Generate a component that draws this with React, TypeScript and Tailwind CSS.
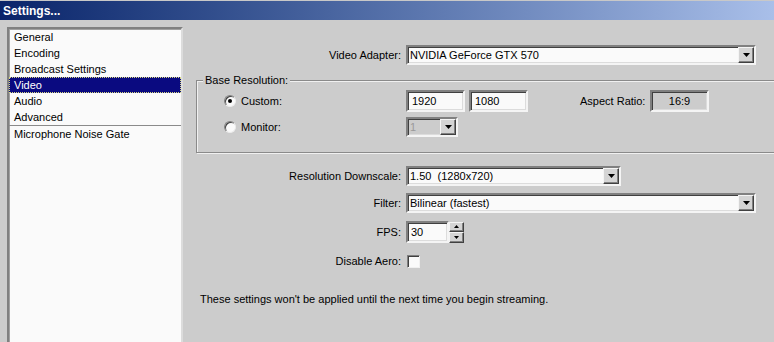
import React from 'react';

const sunken =
  'border-2 border-t-[#808080] border-l-[#808080] border-r-[#f4f4f4] border-b-[#f4f4f4] shadow-[inset_1px_1px_0_#404040,inset_-1px_-1px_0_#dcdcdc]';
const raised =
  'bg-[#d4d4d4] border border-t-[#f4f4f4] border-l-[#f4f4f4] border-r-[#404040] border-b-[#404040] shadow-[inset_-1px_-1px_0_#808080]';

const items = ['General', 'Encoding', 'Broadcast Settings', 'Video', 'Audio', 'Advanced'];

function Arrow({ up = false, small = false }: { up?: boolean; small?: boolean }) {
  const w = small ? 5 : 7;
  const h = small ? 3 : 4;
  return (
    <svg width={w} height={h} viewBox={`0 0 ${w} ${h}`}>
      <polygon
        points={up ? `0,${h} ${w},${h} ${w / 2},0` : `0,0 ${w},0 ${w / 2},${h}`}
        fill="#000"
      />
    </svg>
  );
}

function Select({ value, width, disabled = false }: { value: string; width: string; disabled?: boolean }) {
  return (
    <div
      className={`${sunken} ${width} h-[20px] flex items-center ${disabled ? 'bg-[#cccccc] text-[#9a9a9a]' : 'bg-[#fafafa]'}`}
    >
      <span className="flex-1 pl-[2px] whitespace-pre">{value}</span>
      <div className={`${raised} w-[16px] h-[16px] flex items-center justify-center`}>
        <Arrow />
      </div>
    </div>
  );
}

function Row({ label, children, className = '' }: { label: string; children: React.ReactNode; className?: string }) {
  return (
    <div className={`flex items-center ${className}`}>
      <span className="w-[210px] pr-[5px] text-right whitespace-nowrap">{label}</span>
      {children}
    </div>
  );
}

function Radio({ checked }: { checked: boolean }) {
  return (
    <div className="w-[12px] h-[12px] rounded-full bg-[#fafafa] border border-t-[#808080] border-l-[#808080] border-r-[#ececec] border-b-[#ececec] shadow-[inset_1px_1px_0_#404040] flex items-center justify-center">
      {checked && <div className="w-[4px] h-[4px] rounded-full bg-black" />}
    </div>
  );
}

export default function App() {
  return (
    <div
      className="w-[774px] h-[342px] overflow-hidden bg-[#cccccc] text-[11px] text-black flex flex-col"
      style={{ fontFamily: '"Liberation Sans", Arial, sans-serif' }}
    >
      {/* Title bar */}
      <div className="h-[20px] border-t border-[#c8c8c8] bg-gradient-to-r from-[#0a246a] to-[#a9bfe9] flex items-center pl-[3px] shrink-0">
        <span className="text-white font-bold text-[12px] leading-none">Settings...</span>
      </div>

      <div className="flex flex-1 min-h-0">
        {/* Section list */}
        <div className="pl-[7px] pt-[7px] flex shrink-0">
          <div className="w-[176px] h-[330px] bg-[#fafafa] border-t-2 border-l-2 border-r-2 border-t-[#808080] border-l-[#808080] border-r-[#dcdcdc] shadow-[inset_1px_1px_0_#a0a0a0]">
            {items.map((item) => (
              <div
                key={item}
                className={`h-[16px] flex items-center pl-[5px] ${
                  item === 'Video'
                    ? 'bg-[#0a0a80] text-white outline outline-1 outline-dotted outline-[#d8d880] -outline-offset-1'
                    : ''
                }`}
              >
                {item}
              </div>
            ))}
            <div className="h-px bg-[#8a8a8a]" />
            <div className="h-[16px] flex items-center pl-[5px]">Microphone Noise Gate</div>
          </div>
        </div>

        {/* Video settings */}
        <div className="flex-1 pl-[13px] flex flex-col">
          <Row label="Video Adapter:" className="mt-[25px]">
            <Select value="NVIDIA GeForce GTX 570" width="w-[350px]" />
          </Row>

          <div className="relative mt-[15px] h-[73px] -mr-[4px] border border-[#8a8a8a] shadow-[inset_1px_1px_0_#f0f0f0,1px_1px_0_#f0f0f0]">
            <span className="absolute -top-[8px] left-[6px] bg-[#cccccc] px-[2px] leading-[14px]">Base Resolution:</span>
            <div className="flex items-center mt-[9px] h-[22px]">
              <div className="w-[209px] flex items-center pl-[27px] gap-[5px]">
                <Radio checked />
                <span>Custom:</span>
              </div>
              <div className={`${sunken} w-[59px] h-[22px] bg-[#fafafa] flex items-center pl-[4px]`}>1920</div>
              <div className={`${sunken} w-[59px] h-[22px] bg-[#fafafa] flex items-center pl-[4px] ml-[4px]`}>1080</div>
              <span className="ml-[52px] w-[66px] whitespace-nowrap shrink-0">Aspect Ratio:</span>
              <div className={`${sunken} w-[59px] h-[22px] bg-[#cccccc] flex items-center justify-center ml-[4px] shrink-0`}>16:9</div>
            </div>
            <div className="flex items-center mt-[5px] h-[20px]">
              <div className="w-[209px] flex items-center pl-[27px] gap-[5px]">
                <Radio checked={false} />
                <span>Monitor:</span>
              </div>
              <Select value="1" width="w-[52px]" disabled />
            </div>
          </div>

          <Row label="Resolution Downscale:" className="mt-[13px]">
            <Select value="1.50  (1280x720)" width="w-[215px]" />
          </Row>
          <Row label="Filter:" className="mt-[7px]">
            <Select value="Bilinear (fastest)" width="w-[350px]" />
          </Row>
          <Row label="FPS:" className="mt-[8px]">
            <div className={`${sunken} w-[43px] h-[22px] bg-[#fafafa] flex items-start pl-[3px] pt-[1px]`}>30</div>
            <div className="flex flex-col w-[15px] h-[21px]">
              <div className={`${raised} flex-1 flex items-center justify-center`}>
                <Arrow up small />
              </div>
              <div className={`${raised} flex-1 flex items-center justify-center`}>
                <Arrow small />
              </div>
            </div>
          </Row>
          <Row label="Disable Aero:" className="mt-[10px]">
            <div className="w-[13px] h-[13px] bg-[#fafafa] border border-t-[#808080] border-l-[#808080] border-r-[#f0f0f0] border-b-[#f0f0f0] shadow-[inset_1px_1px_0_#404040] ml-[1px]" />
          </Row>

          <p className="mt-[21px] pl-[4px] whitespace-nowrap">
            These settings won't be applied until the next time you begin streaming.
          </p>
        </div>
      </div>
    </div>
  );
}
